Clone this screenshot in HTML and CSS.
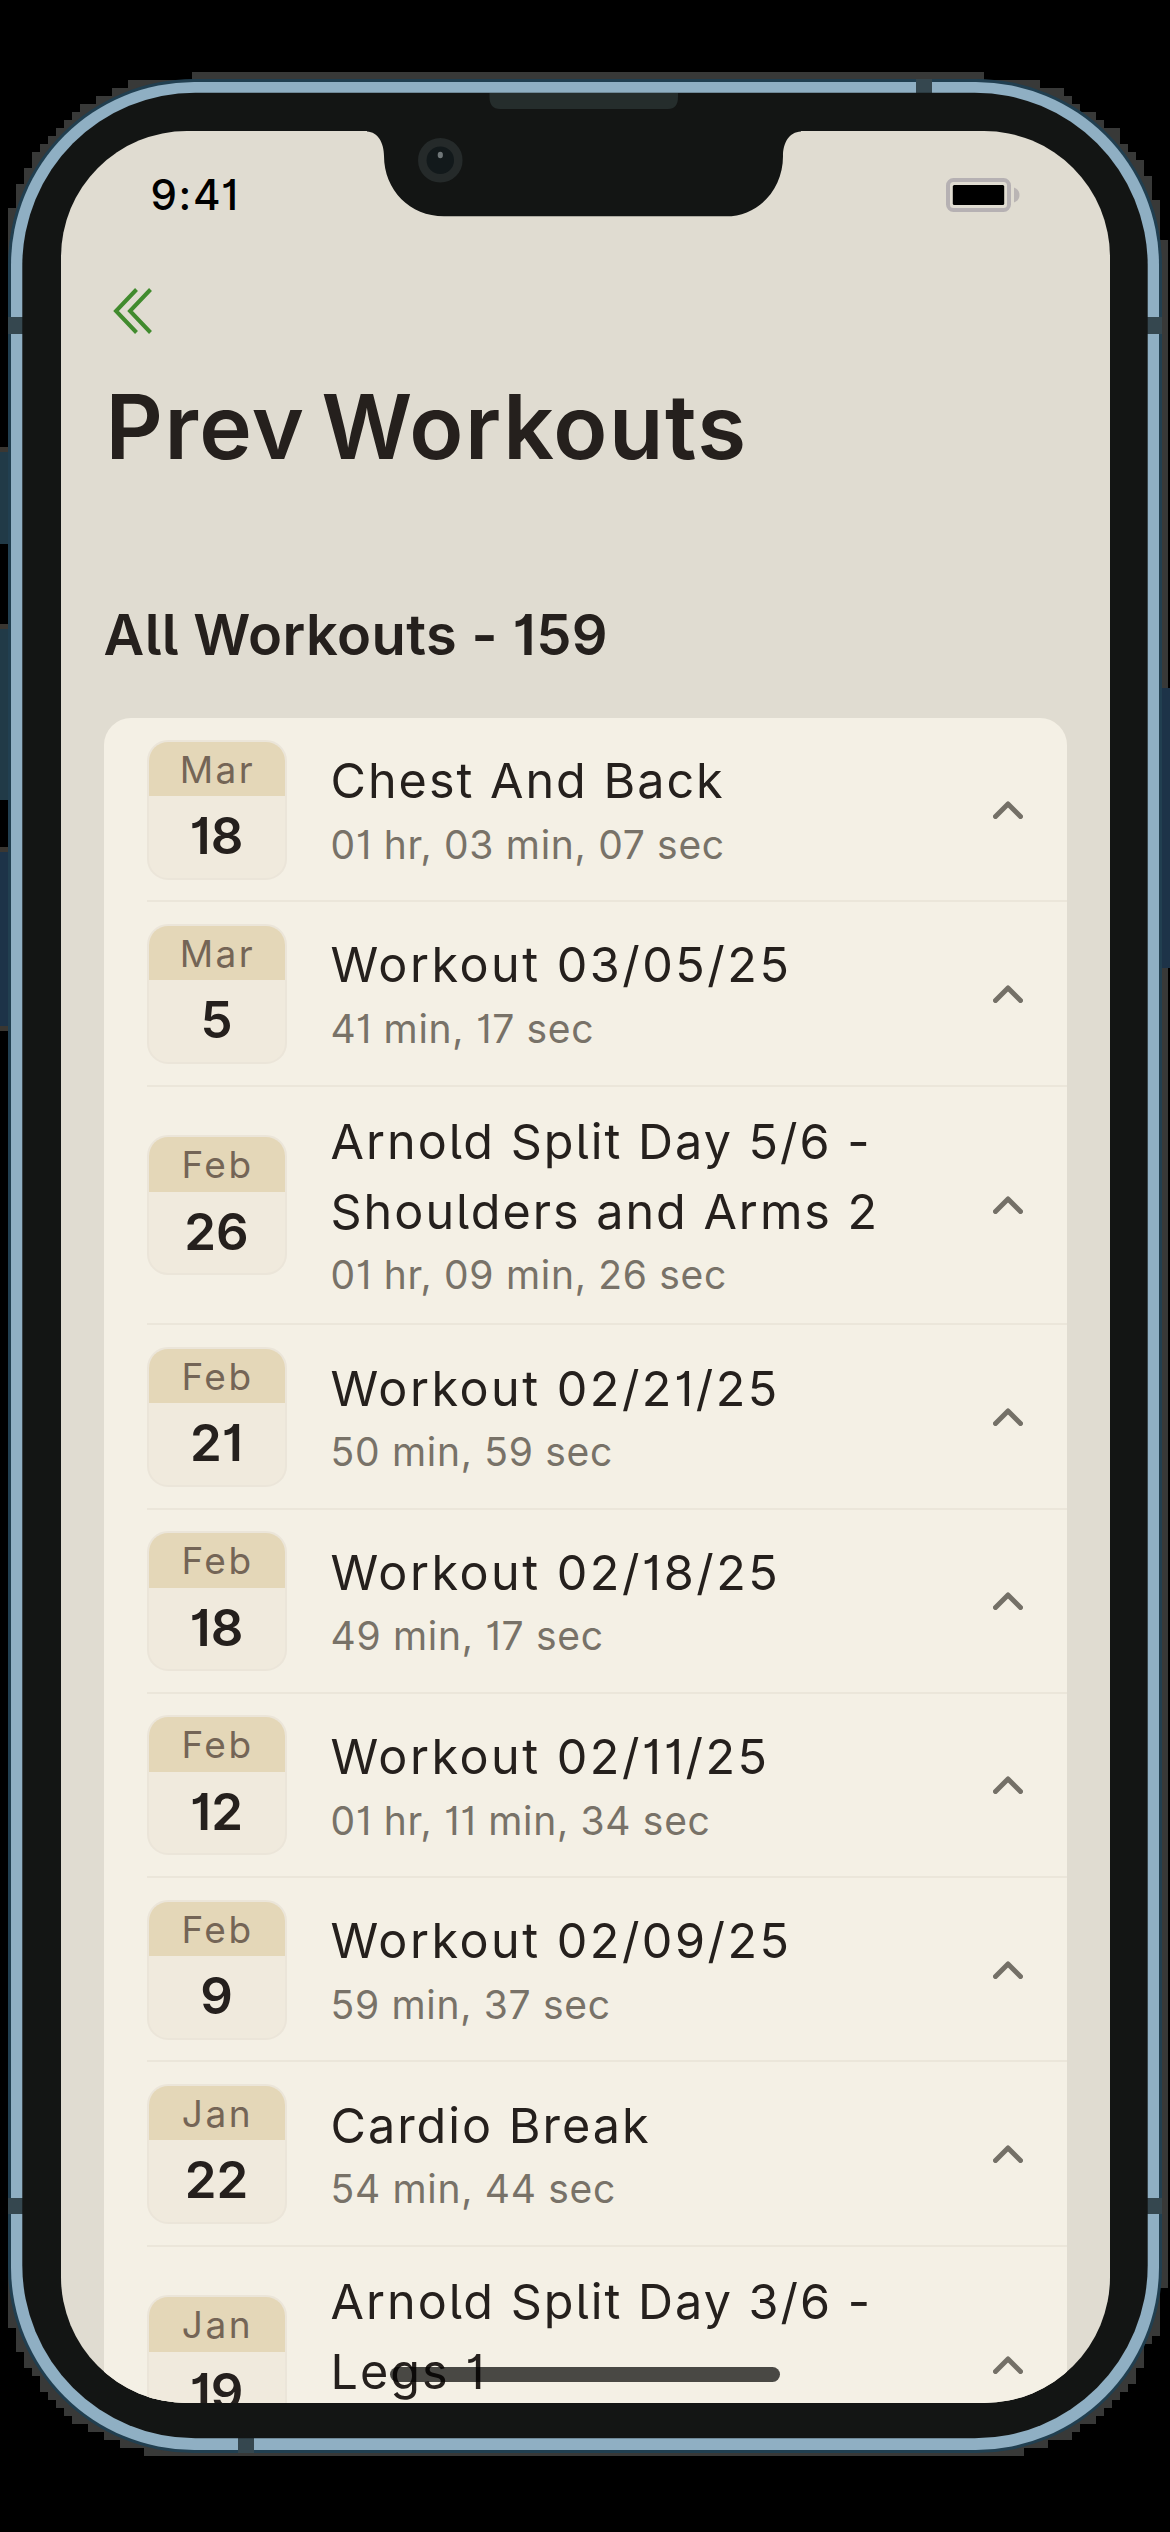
FILE: index.html
```html
<!DOCTYPE html>
<html lang="en">
<head>
<meta charset="utf-8">
<title>Prev Workouts</title>
<link rel="stylesheet" href="styles.css">
</head>
<body>
<svg class="frame" viewBox="0 0 1170 2532" aria-hidden="true">
  <!-- soft outer edge -->
  <path fill="#383938" shape-rendering="crispEdges" d="M192 72H984V80H1040V88H1064V96H1072V104H1080V112H1096V120H1104V128H1120V144H1128V152H1136V160H1144V176H1152V200H1160V240H1168V2288H1160V2336H1152V2344H1144V2368H1136V2384H1128V2392H1120V2400H1112V2408H1104V2416H1096V2424H1080V2432H1072V2440H1048V2448H1024V2456H144V2448H120V2440H104V2432H88V2424H72V2416H64V2408H56V2400H48V2392H40V2376H32V2368H24V2352H16V2328H8V208H16V184H24V168H32V152H40V144H48V136H56V128H64V120H72V112H80V104H96V96H112V88H128V80H192Z"/>
  <!-- side buttons -->
  <path fill="#3a3732" d="M0 447h8v5H0zM0 624h8v5H0zM0 847h8v5H0zM0 1026h8v5H0z"/>
  <path fill="#213a47" d="M0 452h9v92H0zM0 629h9v171H0z"/>
  <path fill="#1d3348" d="M0 852h9v174H0zM1160 688h10v280h-10z"/>
  <!-- steel band -->
  <rect x="8" y="79" width="1154" height="2374" rx="186" fill="#213f50"/>
  <rect x="11" y="82" width="1148" height="2368" rx="183" fill="#8fafc3"/>
  <path fill="#35474f" d="M8 317h16v17H8zM1146 317h16v17h-16zM8 2198h16v16H8zM1146 2198h16v16h-16zM916 79h16v16h-16zM238 2437h16v16h-16z"/>
  <rect x="22.3" y="92.7" width="1125.4" height="2345.6" rx="173" fill="#131514"/>
</svg>

<div class="screen">
  <div class="status">
    <span class="time">9:41</span>
    <svg class="battery" width="74" height="34" viewBox="0 0 74 34" aria-hidden="true">
      <rect x="2" y="2" width="61" height="30" rx="5.5" fill="none" stroke="#b6b1b3" stroke-width="4"/>
      <rect x="6.8" y="7" width="51.4" height="20" rx="1.5"/>
      <path d="M68 9.500q5.500 2 5.500 7.500t-5.500 7.500z" fill="#bab5b4"/>
    </svg>
  </div>

  <header class="header">
    <svg class="back" width="42" height="48" viewBox="0 0 42 48" aria-hidden="true">
      <path d="M25.500 2.500L5 24l20.500 21.500M39.500 2.500L19 24l20.500 21.500" fill="none" stroke="#418b2e" stroke-width="4"/>
    </svg>
    <h1 class="title">Prev Workouts</h1>
    <h2 class="subtitle">All Workouts - 159</h2>
  </header>

  <ul class="card">
    <li class="row">
      <div class="date"><span class="month">Mar</span><span class="day">18</span></div>
      <div class="info"><div class="name">Chest And Back</div><div class="length">01 hr, 03 min, 07 sec</div></div>
      <svg class="chevron" viewBox="0 0 30 18"><path d="M2.500 15.500L15 3l12.500 12.500"/></svg>
    </li>
    <li class="row">
      <div class="date"><span class="month">Mar</span><span class="day">5</span></div>
      <div class="info"><div class="name dated">Workout 03/05/25</div><div class="length">41 min, 17 sec</div></div>
      <svg class="chevron" viewBox="0 0 30 18"><path d="M2.500 15.500L15 3l12.500 12.500"/></svg>
    </li>
    <li class="row">
      <div class="date"><span class="month">Feb</span><span class="day">26</span></div>
      <div class="info"><div class="name">Arnold Split Day 5/6 - Shoulders and Arms 2</div><div class="length">01 hr, 09 min, 26 sec</div></div>
      <svg class="chevron" viewBox="0 0 30 18"><path d="M2.500 15.500L15 3l12.500 12.500"/></svg>
    </li>
    <li class="row">
      <div class="date"><span class="month">Feb</span><span class="day">21</span></div>
      <div class="info"><div class="name dated">Workout 02/21/25</div><div class="length">50 min, 59 sec</div></div>
      <svg class="chevron" viewBox="0 0 30 18"><path d="M2.500 15.500L15 3l12.500 12.500"/></svg>
    </li>
    <li class="row">
      <div class="date"><span class="month">Feb</span><span class="day">18</span></div>
      <div class="info"><div class="name dated">Workout 02/18/25</div><div class="length">49 min, 17 sec</div></div>
      <svg class="chevron" viewBox="0 0 30 18"><path d="M2.500 15.500L15 3l12.500 12.500"/></svg>
    </li>
    <li class="row">
      <div class="date"><span class="month">Feb</span><span class="day">12</span></div>
      <div class="info"><div class="name dated">Workout 02/11/25</div><div class="length">01 hr, 11 min, 34 sec</div></div>
      <svg class="chevron" viewBox="0 0 30 18"><path d="M2.500 15.500L15 3l12.500 12.500"/></svg>
    </li>
    <li class="row">
      <div class="date"><span class="month">Feb</span><span class="day">9</span></div>
      <div class="info"><div class="name dated">Workout 02/09/25</div><div class="length">59 min, 37 sec</div></div>
      <svg class="chevron" viewBox="0 0 30 18"><path d="M2.500 15.500L15 3l12.500 12.500"/></svg>
    </li>
    <li class="row">
      <div class="date"><span class="month">Jan</span><span class="day">22</span></div>
      <div class="info"><div class="name">Cardio Break</div><div class="length">54 min, 44 sec</div></div>
      <svg class="chevron" viewBox="0 0 30 18"><path d="M2.500 15.500L15 3l12.500 12.500"/></svg>
    </li>
    <li class="row">
      <div class="date"><span class="month">Jan</span><span class="day">19</span></div>
      <div class="info"><div class="name">Arnold Split Day 3/6 - Legs 1</div><div class="length"></div></div>
      <svg class="chevron" viewBox="0 0 30 18"><path d="M2.500 15.500L15 3l12.500 12.500"/></svg>
    </li>
  </ul>
  <div class="home-bar"></div>
</div>

<svg class="notch" width="440" height="126" viewBox="365 92 440 126" aria-hidden="true">
  <path fill="#131514" d="M367 130V131.500C378 132 384 143 384 156C384 190 410 216.300 444 216.300H726C758 216.300 783 190 783 156C783 143 789 132 801 131.500V130Z"/>
  <path fill="#252d2c" d="M489.500 93H678V97Q678 109 668 109H500Q489.500 109 489.500 97Z"/>
  <circle cx="440.300" cy="160.300" r="18" fill="#12191b" stroke="#252a2a" stroke-width="8.500"/>
  <ellipse cx="440.300" cy="155" rx="2.600" ry="3.200" fill="#6f7678"/>
</svg>
</body>
</html>
```
FILE: styles.css
```css
* { box-sizing: border-box; margin: 0; padding: 0; }

body {
  position: relative;
  width: 1170px;
  height: 2532px;
  overflow: hidden;
  padding: 131.300px 60.500px 0;
  background: #000;
  color: #25201d;
  font-family: Inter, "Liberation Sans", sans-serif;
  font-feature-settings: "cv01", "cv05";
}

.frame { position: absolute; left: 0; top: 0; width: 1170px; height: 2532px; }
.notch { position: absolute; left: 365px; top: 92px; }

.screen {
  position: relative;
  height: 2271.400px;
  overflow: hidden;
  padding: 0 43px;
  border-radius: 126px;
  background: #e0dcd1;
}

.status {
  display: flex;
  align-items: center;
  justify-content: space-between;
  height: 127px;
  padding: 0 47px;
}
.time { color: #000; font-size: 42px; font-weight: 500; letter-spacing: 1.600px; }
.battery { display: block; }

.header { padding-top: 29px; }
.back { display: block; margin-left: 7.500px; }
.title {
  margin-top: 36.500px;
  padding-left: 2px;
  font-size: 89px;
  font-weight: 600;
  line-height: 110px;
  letter-spacing: 1.500px;
  word-spacing: -8px;
}
.subtitle {
  margin-top: 117.900px;
  font-size: 56px;
  font-weight: 600;
  line-height: 70px;
  letter-spacing: 0.400px;
}

.card {
  margin-top: 48.500px;
  padding-left: 43px;
  border-radius: 27px;
  background: #f4f0e5;
  list-style: none;
}
.row {
  display: flex;
  align-items: center;
  min-height: 184.250px;
  padding: 20.500px 44px 20.100px 0;
  border-bottom: 2px solid #ebe6da;
}

.date {
  display: flex;
  flex-direction: column;
  width: 140px;
  height: 140px;
  margin-right: 44px;
  overflow: hidden;
  border: 2px solid #ebe5d9;
  border-radius: 21px;
  background: #f0eadd;
  text-align: center;
}
.month {
  height: 54.500px;
  padding-left: 2px;
  background: #e4d7b8;
  color: #746556;
  font-size: 37px;
  line-height: 56px;
  letter-spacing: 2.500px;
}
.day { font-size: 51px; font-weight: 600; line-height: 80px; }

.info { flex: 1; }
.name { font-size: 48.500px; line-height: 69.600px; letter-spacing: 2px; }
.dated { letter-spacing: 2.500px; }
.length { height: 57px; color: #787268; font-size: 39px; line-height: 57px; letter-spacing: 0.700px; }

.chevron { width: 30px; height: 18px; fill: none; stroke: #747067; stroke-width: 5; stroke-linecap: round; stroke-linejoin: round; }

.home-bar {
  position: absolute;
  left: 329.500px;
  bottom: 20.500px;
  width: 390px;
  height: 15px;
  border-radius: 8px;
  background: rgba(0, 0, 0, 0.7);
}
```
